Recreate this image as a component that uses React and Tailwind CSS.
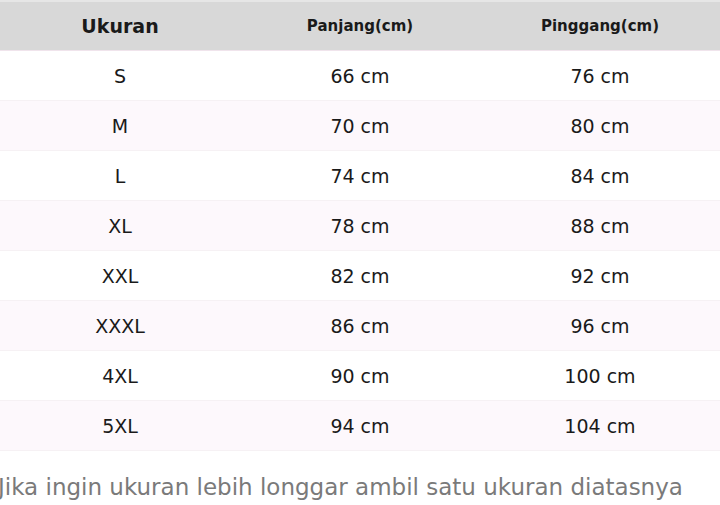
const rows = [
  ["S", "66 cm", "76 cm"],
  ["M", "70 cm", "80 cm"],
  ["L", "74 cm", "84 cm"],
  ["XL", "78 cm", "88 cm"],
  ["XXL", "82 cm", "92 cm"],
  ["XXXL", "86 cm", "96 cm"],
  ["4XL", "90 cm", "100 cm"],
  ["5XL", "94 cm", "104 cm"],
];

export default function App() {
  return (
    <div
      className="w-[720px] h-[505px] bg-white overflow-hidden text-[#1a1a1a]"
      style={{ fontFamily: '"DejaVu Sans", sans-serif' }}
    >
      {/* Header */}
      <div className="grid grid-cols-3 h-[51px] bg-[#d8d8d8] border-t-2 border-[#e6e6e6] border-b border-b-[#f0e4ec] items-center">
        <div className="text-center text-[19px] font-bold">Ukuran</div>
        <div className="text-center text-[15px] font-bold">Panjang(cm)</div>
        <div className="text-center text-[15px] font-bold">Pinggang(cm)</div>
      </div>

      {/* Rows */}
      {rows.map((r, i) => (
        <div
          key={r[0]}
          className={`grid grid-cols-3 h-[50px] pt-[2px] items-center border-b border-[#f6f1f4] ${
            i % 2 === 1 ? "bg-[#fdf8fc]" : "bg-white"
          }`}
        >
          {r.map((c, j) => (
            <div key={j} className="text-center text-[19px]">
              {c}
            </div>
          ))}
        </div>
      ))}

      <p className="mt-[21px] -ml-[2px] text-[23px] leading-[30px] text-[#7a7a7a] whitespace-nowrap">
        Jika ingin ukuran lebih longgar ambil satu ukuran diatasnya
      </p>
    </div>
  );
}
